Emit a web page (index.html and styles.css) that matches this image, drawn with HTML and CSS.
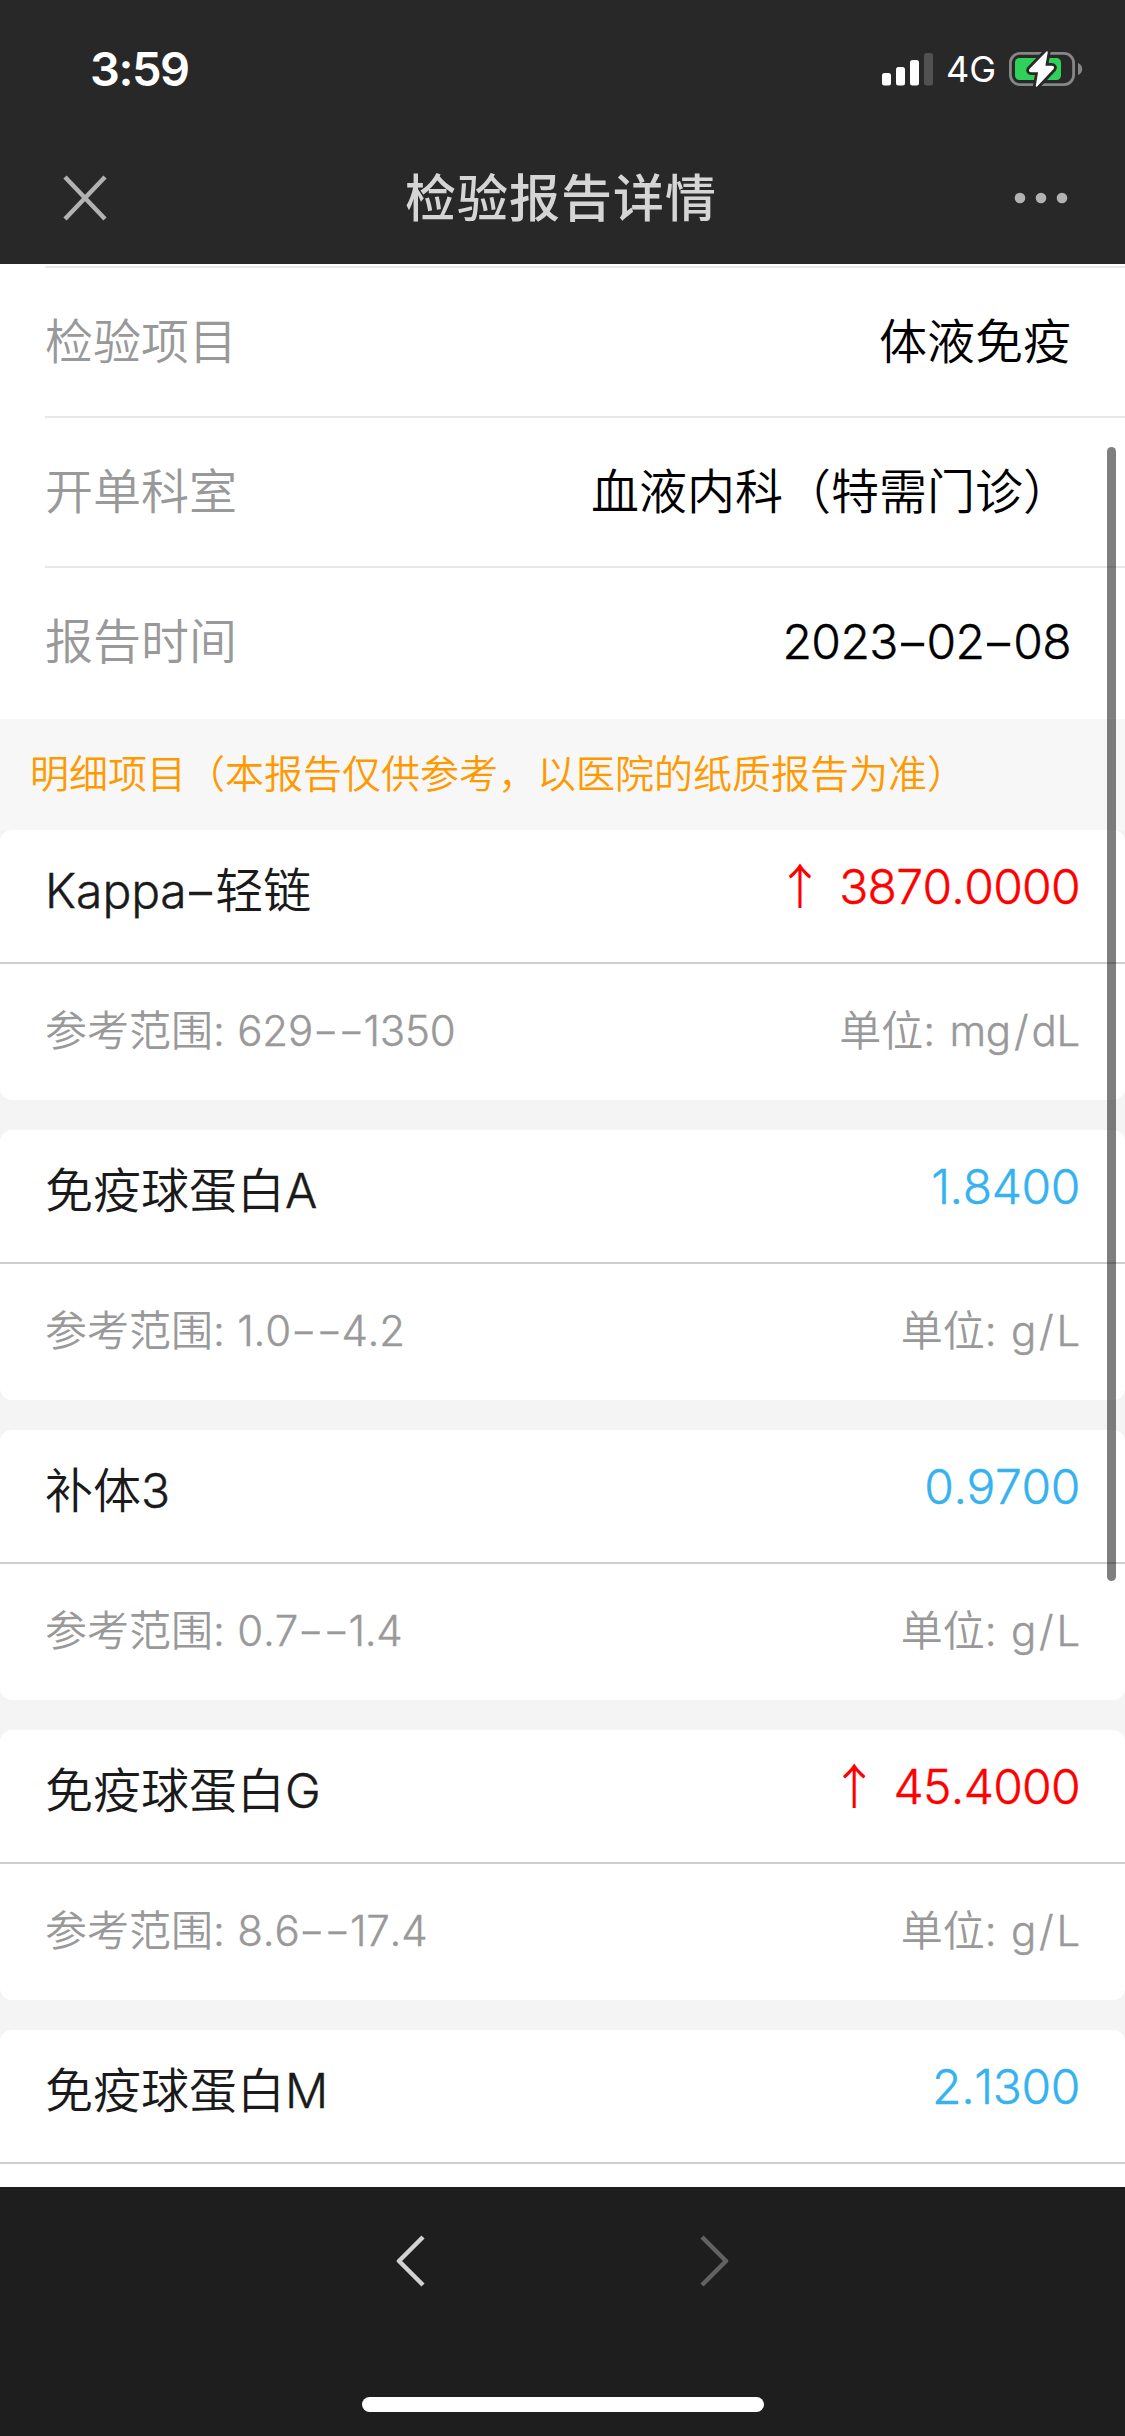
FILE: index.html
```html
<!DOCTYPE html>
<html lang="zh-CN">
<head>
<meta charset="utf-8">
<title>检验报告详情</title>
<link rel="stylesheet" href="styles.css">
</head>
<body>
<div class="screen">
  <header class="header">
    <div class="status">
      <span class="clock">3:59</span>
      <div class="indicators">
        <svg class="signal" width="52" height="34" viewBox="0 0 52 34">
          <g fill="#fff"><rect x="0" y="21" width="9" height="12.500" rx="2.500"/><rect x="14" y="15" width="9" height="18.500" rx="2.500"/><rect x="28" y="8" width="9" height="25.500" rx="2.500"/></g>
          <rect x="42" y="1" width="9" height="32.500" rx="2.500" fill="#515151"/>
        </svg>
        <span class="network">4G</span>
        <svg class="battery" width="76" height="40" viewBox="0 0 76 40">
          <rect x="2.400" y="4.400" width="63.200" height="31.200" rx="9.500" fill="none" stroke="#868686" stroke-width="2.800"/>
          <path d="M70 14c2.600 1 4.200 3.200 4.200 6s-1.600 5-4.200 6z" fill="#868686"/>
          <rect x="7" y="9" width="46" height="22" rx="4.500" fill="#30d158"/>
          <path d="M39 3 22 20.500q-1 2 1.500 2H31L28.500 37 45 19.500q1-2-1.500-2H36.500z" fill="#282828" stroke="#282828" stroke-width="7" stroke-linejoin="round"/>
          <path d="M39 3 22 20.500q-1 2 1.500 2H31L28.500 37 45 19.500q1-2-1.500-2H36.500z" fill="#fff" stroke="#fff" stroke-width="1.500" stroke-linejoin="round"/>
        </svg>
      </div>
    </div>
    <div class="navbar">
      <svg class="close" width="50" height="50" viewBox="0 0 50 50"><path d="M5 4 45 46M45 4 5 46" stroke="#b2b2b2" stroke-width="4.500"/></svg>
      <h1 class="title">检验报告详情</h1>
      <svg class="more" width="54" height="12" viewBox="0 0 54 12" fill="#b2b2b2"><circle cx="6" cy="6" r="5.300"/><circle cx="27" cy="6" r="5.300"/><circle cx="48" cy="6" r="5.300"/></svg>
    </div>
  </header>

  <main class="content">
    <dl class="info">
      <div class="info-row"><dt>检验项目</dt><dd>体液免疫</dd></div>
      <div class="info-row"><dt>开单科室</dt><dd>血液内科（特需门诊）</dd></div>
      <div class="info-row"><dt>报告时间</dt><dd class="date latin">2023<i class="dash">-</i>02<i class="dash">-</i>08</dd></div>
    </dl>
    <p class="notice">明细项目（本报告仅供参考，以医院的纸质报告为准）</p>
    <section class="results">
      <article class="card">
        <div class="main"><span class="name"><span class="latin">Kappa<i class="dash">-</i></span>轻链</span><span class="value high"><span class="arrow">↑</span><span class="latin">3870.0000</span></span></div>
        <div class="meta"><span>参考范围<span class="latin">: 629<i class="dash pair">--</i>1350</span></span><span class="unit">单位<span class="latin">: mg<i class="slash">/</i>dL</span></span></div>
      </article>
      <article class="card">
        <div class="main"><span class="name">免疫球蛋白<span class="latin">A</span></span><span class="value latin">1.8400</span></div>
        <div class="meta"><span>参考范围<span class="latin">: 1.0<i class="dash pair">--</i>4.2</span></span><span class="unit">单位<span class="latin">: g<i class="slash">/</i>L</span></span></div>
      </article>
      <article class="card">
        <div class="main"><span class="name">补体<span class="latin">3</span></span><span class="value latin">0.9700</span></div>
        <div class="meta"><span>参考范围<span class="latin">: 0.7<i class="dash pair">--</i>1.4</span></span><span class="unit">单位<span class="latin">: g<i class="slash">/</i>L</span></span></div>
      </article>
      <article class="card">
        <div class="main"><span class="name">免疫球蛋白<span class="latin">G</span></span><span class="value high"><span class="arrow">↑</span><span class="latin">45.4000</span></span></div>
        <div class="meta"><span>参考范围<span class="latin">: 8.6<i class="dash pair">--</i>17.4</span></span><span class="unit">单位<span class="latin">: g<i class="slash">/</i>L</span></span></div>
      </article>
      <article class="card">
        <div class="main"><span class="name">免疫球蛋白<span class="latin">M</span></span><span class="value latin">2.1300</span></div>
      </article>
    </section>
    <div class="scrollbar"></div>
  </main>

  <footer class="toolbar">
    <div class="history">
      <svg width="30" height="54" viewBox="0 0 30 54"><path d="M27 3 3 27 27 51" fill="none" stroke="#d2d2d2" stroke-width="4.500" stroke-linejoin="round"/></svg>
      <svg width="30" height="54" viewBox="0 0 30 54"><path d="M3 3 27 27 3 51" fill="none" stroke="#626262" stroke-width="4.500" stroke-linejoin="round"/></svg>
    </div>
    <div class="home-indicator"></div>
  </footer>
</div>
</body>
</html>
```
FILE: styles.css
```css
* { box-sizing: border-box; }

body {
  margin: 0;
  font-family: Inter, "Noto Sans CJK SC", sans-serif;
  font-size: 48px;
  font-weight: 350;
  color: #000;
}

/* Light Latin glyphs, thickened slightly to balance the Chinese text */
.latin {
  font-weight: 300;
  font-kerning: none;
  -webkit-text-stroke: 0.4px currentColor;
}

.screen {
  display: flex;
  flex-direction: column;
  width: 1125px;
  height: 2436px;
  overflow: hidden;
}

/* Header */
.header {
  flex: none;
  height: 264px;
  background: #282828;
}

.status {
  display: flex;
  justify-content: space-between;
  align-items: center;
  height: 132px;
  padding: 6px 41px 0 90px;
}

.clock {
  color: #fff;
  font-size: 47px;
  font-weight: 600;
  letter-spacing: -1.5px;
  line-height: 60px;
}

.indicators { display: flex; align-items: center; }

.network {
  margin-left: 12px;
  color: #fff;
  font-size: 36px;
  font-weight: 400;
  line-height: 40px;
}

.battery { margin-left: 12px; }

.navbar {
  display: flex;
  justify-content: space-between;
  align-items: center;
  height: 132px;
  padding: 0 57px 0 60px;
}

.title {
  margin: 0;
  padding: 2px 2px 0 0;
  color: #d5d5d5;
  font-size: 51px;
  font-weight: 500;
  letter-spacing: 1px;
  line-height: 60px;
}

/* Scrolling content */
.content {
  position: relative;
  flex: 1;
  min-height: 0;
  overflow: hidden;
  background: #f4f4f4;
}

.info {
  margin: 0;
  height: 455px;
  padding: 2px 0 0 45px;
  background: #fff;
}

.info-row {
  display: flex;
  justify-content: space-between;
  height: 150px;
  padding-right: 54px;
  border-top: 2px solid #e8e8e8;
  line-height: 148px;
}

.info dt { color: #999; }
.info dd { margin: 0; }
.info .date { letter-spacing: -0.6px; }

/* Hyphens stretched to the width of a digit */
.dash {
  display: inline-flex;
  justify-content: center;
  width: 0.44em;
  margin: 0 0.08em;
  font-style: normal;
  letter-spacing: 0;
  line-height: 1;
  white-space: nowrap;
  transform: scaleX(1.55);
}

.meta .latin .pair {
  width: 0.88em;
  margin: 0 0.16em;
  transform: scaleX(1.36);
}

.notice {
  margin: 0;
  height: 111px;
  padding-left: 30px;
  background: #f7f7f7;
  color: #f90;
  font-size: 39px;
  line-height: 110px;
  white-space: nowrap;
}

.results {
  display: flex;
  flex-direction: column;
  gap: 30px;
}

.card {
  height: 270px;
  border-radius: 12px;
  background: #fff;
}

.main, .meta {
  display: flex;
  justify-content: space-between;
  padding: 0 45px;
}

.main {
  height: 134px;
  border-bottom: 2px solid #cfcfd3;
  color: #1a1a1a;
  line-height: 122px;
}

.value {
  color: #35b2f0;
  letter-spacing: -0.4px;
  line-height: 113px;
}

.value.high {
  color: #f00;
  letter-spacing: -0.7px;
}

.arrow {
  margin-right: 16px;
  font-family: "Noto Sans CJK SC", sans-serif;
  line-height: 1;
}

.meta {
  color: #999;
  font-size: 42px;
  line-height: 134px;
  word-spacing: 1px;
}

.meta .latin { letter-spacing: -0.2px; }

.unit { word-spacing: 3px; }

.slash {
  display: inline-block;
  margin: 0 3px;
  font-style: normal;
  line-height: 1;
}

.scrollbar {
  position: absolute;
  top: 183px;
  right: 9px;
  width: 9px;
  height: 1134px;
  border-radius: 5px;
  background: rgba(0, 0, 0, 0.5);
}

/* Bottom toolbar */
.toolbar {
  display: flex;
  flex-direction: column;
  justify-content: space-between;
  align-items: center;
  flex: none;
  height: 249px;
  padding: 47px 0 24px;
  background: #1e1e1e;
}

.history { display: flex; gap: 273px; }

.home-indicator {
  width: 402px;
  height: 15px;
  border-radius: 8px;
  background: #fff;
}
```
